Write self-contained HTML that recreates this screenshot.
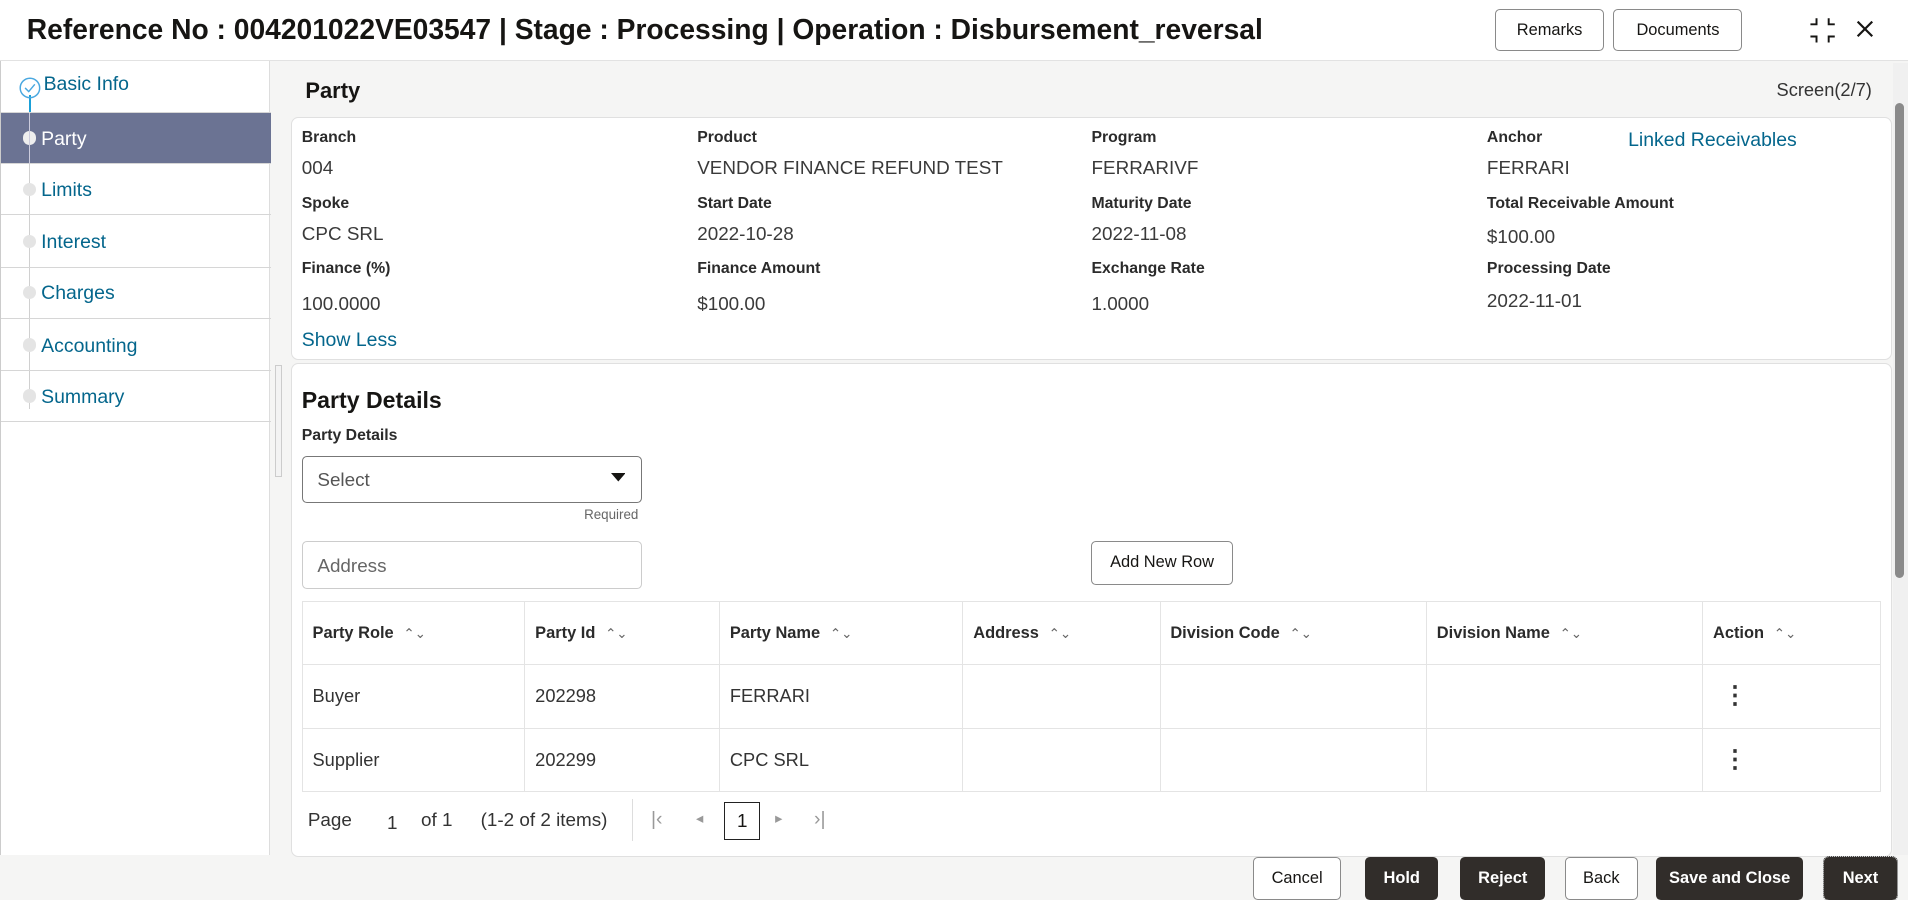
<!DOCTYPE html>
<html><head><meta charset="utf-8"><style>
*{box-sizing:border-box;margin:0;padding:0}
html,body{width:1908px;height:900px;overflow:hidden;background:#fff}
#w{zoom:1.2168;width:1568px;height:740px;position:relative;font-family:"Liberation Sans",sans-serif;color:#161513;background:#f5f5f4}
.a{position:absolute}
.hdr{left:0;top:0;width:1568px;height:50px;background:#fff;border-bottom:1px solid #e2e2e2}
.title{left:22px;top:11px;font-size:23.2px;font-weight:bold}
.btn{position:absolute;border:1px solid #8a8a8a;border-radius:4px;background:#fff;font-size:13.5px;text-align:center;color:#161513}
.dbtn{position:absolute;border-radius:4px;background:#312d2a;color:#fff;font-size:13.5px;font-weight:bold;text-align:center}
.side{left:0;top:50px;width:222px;height:653px;background:#fff;border-right:1px solid #ddd;border-left:1px solid #ccc}
.nav{position:absolute;left:0;width:222px;height:42px;border-bottom:1px solid #d6d6d6;color:#04668c;font-size:16px;padding:12px 0 0 33px}
.dot{position:absolute;left:18px;top:15px;width:11px;height:11px;border-radius:50%;background:#e4e4e4}
.vl{position:absolute;left:23px;width:1px;background:#d0d0d0}
.card{background:#fff;border:1px solid #e0e0e0;border-radius:6px}
.lb{position:absolute;font-size:13px;font-weight:bold;color:#2b2b2b}
.vv{position:absolute;font-size:15.5px;color:#3a3a3a}
table{border-collapse:collapse;position:absolute;left:248px;top:494px;width:1298px}
td,th{border:1px solid #e4e4e4;height:52px;text-align:left;padding-left:8px;font-size:15px;color:#333;font-weight:normal}
th{font-size:13.5px;font-weight:bold;color:#2b2b2b}
th span{font-weight:normal;color:#666;margin-left:8px;font-size:11px}
</style></head><body><div id="w">
<div class="a hdr"></div>
<div class="a title">Reference No : 004201022VE03547 | Stage : Processing | Operation : Disbursement_reversal</div>
<div class="btn" style="left:1229px;top:7px;width:89px;height:35px;line-height:33px">Remarks</div>
<div class="btn" style="left:1326px;top:7px;width:106px;height:35px;line-height:33px">Documents</div>
<svg class="a" style="left:1486px;top:14px" width="24" height="22" viewBox="0 0 24 22" fill="none" stroke="#161513" stroke-width="1.6"><path d="M7 1v5H2M17 1v5h5M7 21v-5H2M17 21v-5h5"/></svg>
<svg class="a" style="left:1524px;top:15px" width="18" height="18" viewBox="0 0 18 18" stroke="#161513" stroke-width="1.8"><path d="M3 3l12 12M15 3L3 15"/></svg>

<div class="a side">
 <div class="vl" style="top:36px;height:250px"></div>
 <div class="vl" style="top:28px;height:14px;background:#1aa0d8;width:2px;left:23px"></div>
 <div class="nav" style="top:0;height:43px;padding-top:10px;padding-left:35px">Basic Info</div>
 <svg class="a" style="left:15px;top:13px" width="18" height="18" viewBox="0 0 18 18" fill="none" stroke="#4aa8e0" stroke-width="1.2"><circle cx="9" cy="9" r="8"/><path d="M5 9l3 3 5-6"/></svg>
 <div class="nav" style="top:43px;background:#6b7393;color:#fff;height:42px">Party<div class="dot" style="background:#eee;top:15px"></div><div class="vl" style="top:0;height:42px;background:#ccd"></div></div>
 <div class="nav" style="top:85px">Limits<div class="dot"></div></div>
 <div class="nav" style="top:128px">Interest<div class="dot"></div></div>
 <div class="nav" style="top:170px">Charges<div class="dot"></div></div>
 <div class="nav" style="top:213px">Accounting<div class="dot"></div></div>
 <div class="nav" style="top:255px">Summary<div class="dot"></div></div>
</div>
<div class="a" style="left:226px;top:300px;width:6px;height:92px;border:1px solid #ccc;background:#f3f3f3"></div>

<div class="a" style="left:251px;top:64px;font-size:18px;font-weight:bold">Party</div>
<div class="a" style="left:1460px;top:65px;font-size:15px;color:#333">Screen(2/7)</div>

<div class="a card" style="left:239px;top:96px;width:1316px;height:200px"></div>
<div class="lb" style="left:248px;top:106px">Branch</div><div class="vv" style="left:248px;top:129px">004</div>
<div class="lb" style="left:573px;top:106px">Product</div><div class="vv" style="left:573px;top:129px">VENDOR FINANCE REFUND TEST</div>
<div class="lb" style="left:897px;top:106px">Program</div><div class="vv" style="left:897px;top:129px">FERRARIVF</div>
<div class="lb" style="left:1222px;top:106px">Anchor</div><div class="vv" style="left:1222px;top:129px">FERRARI</div>
<div class="a" style="left:1338px;top:106px;font-size:16px;color:#04668c">Linked Receivables</div>
<div class="lb" style="left:248px;top:160px">Spoke</div><div class="vv" style="left:248px;top:183px">CPC SRL</div>
<div class="lb" style="left:573px;top:160px">Start Date</div><div class="vv" style="left:573px;top:183px">2022-10-28</div>
<div class="lb" style="left:897px;top:160px">Maturity Date</div><div class="vv" style="left:897px;top:183px">2022-11-08</div>
<div class="lb" style="left:1222px;top:160px">Total Receivable Amount</div><div class="vv" style="left:1222px;top:186px">$100.00</div>
<div class="lb" style="left:248px;top:214px">Finance (%)</div><div class="vv" style="left:248px;top:241px">100.0000</div>
<div class="lb" style="left:573px;top:214px">Finance Amount</div><div class="vv" style="left:573px;top:241px">$100.00</div>
<div class="lb" style="left:897px;top:214px">Exchange Rate</div><div class="vv" style="left:897px;top:241px">1.0000</div>
<div class="lb" style="left:1222px;top:214px">Processing Date</div><div class="vv" style="left:1222px;top:238px">2022-11-01</div>
<div class="a" style="left:248px;top:270px;font-size:16px;color:#04668c">Show Less</div>

<div class="a card" style="left:239px;top:298px;width:1316px;height:406px"></div>
<div class="a" style="left:248px;top:318px;font-size:19px;font-weight:bold">Party Details</div>
<div class="lb" style="left:248px;top:351px">Party Details</div>
<div class="a" style="left:248px;top:375px;width:280px;height:38px;border:1px solid #777;border-radius:4px;background:#fff;font-size:15.5px;color:#555;padding:10px 12px">Select</div>
<svg class="a" style="left:502px;top:389px" width="12" height="8"><path d="M0 0h12L6 7z" fill="#161513"/></svg>
<div class="a" style="left:480px;top:417px;font-size:11px;color:#666">Required</div>
<div class="a" style="left:248px;top:445px;width:280px;height:39px;border:1px solid #ccc;border-radius:4px;background:#fff;font-size:15.5px;color:#666;padding:10px 12px">Address</div>
<div class="btn" style="left:897px;top:445px;width:116px;height:36px;line-height:34px">Add New Row</div>

<table>
<tr><th style="width:183px">Party Role<span>⌃⌄</span></th><th style="width:160px">Party Id<span>⌃⌄</span></th><th style="width:200px">Party Name<span>⌃⌄</span></th><th style="width:162px">Address<span>⌃⌄</span></th><th style="width:219px">Division Code<span>⌃⌄</span></th><th style="width:227px">Division Name<span>⌃⌄</span></th><th>Action<span>⌃⌄</span></th></tr>
<tr><td>Buyer</td><td>202298</td><td>FERRARI</td><td></td><td></td><td></td><td style="padding-left:16px;font-size:20px;font-weight:bold;line-height:1">⋮</td></tr>
<tr><td>Supplier</td><td>202299</td><td>CPC SRL</td><td></td><td></td><td></td><td style="padding-left:16px;font-size:20px;font-weight:bold;line-height:1">⋮</td></tr>
</table>
<div class="a" style="left:253px;top:665px;font-size:15.5px;color:#333">Page</div>
<div class="a" style="left:318px;top:667px;font-size:15.5px;color:#333">1</div>
<div class="a" style="left:346px;top:665px;font-size:15.5px;color:#333">of 1</div>
<div class="a" style="left:395px;top:665px;font-size:15.5px;color:#333">(1-2 of 2 items)</div>
<div class="a" style="left:519px;top:657px;width:1px;height:34px;background:#ddd"></div>
<div class="a" style="left:535px;top:664px;font-size:16px;color:#999">|‹</div>
<div class="a" style="left:572px;top:666px;font-size:12px;color:#999">◂</div>
<div class="a" style="left:595px;top:659px;width:30px;height:31px;border:1px solid #222;text-align:center;line-height:29px;font-size:15.5px">1</div>
<div class="a" style="left:637px;top:666px;font-size:12px;color:#999">▸</div>
<div class="a" style="left:669px;top:664px;font-size:16px;color:#999">›|</div>

<div class="a" style="left:1556px;top:52px;width:12px;height:651px;background:#f0f0f0"></div>
<div class="a" style="left:1557px;top:85px;width:8px;height:390px;border-radius:4px;background:#8a8a8a"></div>

<div class="btn" style="left:1030px;top:704px;width:72px;height:36px;line-height:34px">Cancel</div>
<div class="dbtn" style="left:1122px;top:704px;width:60px;height:36px;line-height:36px">Hold</div>
<div class="dbtn" style="left:1200px;top:704px;width:70px;height:36px;line-height:36px">Reject</div>
<div class="btn" style="left:1286px;top:704px;width:60px;height:36px;line-height:34px">Back</div>
<div class="dbtn" style="left:1361px;top:704px;width:121px;height:36px;line-height:36px">Save and Close</div>
<div class="dbtn" style="left:1499px;top:704px;width:60px;height:36px;line-height:36px;outline:1px dotted #333">Next</div>
</div></body></html>
